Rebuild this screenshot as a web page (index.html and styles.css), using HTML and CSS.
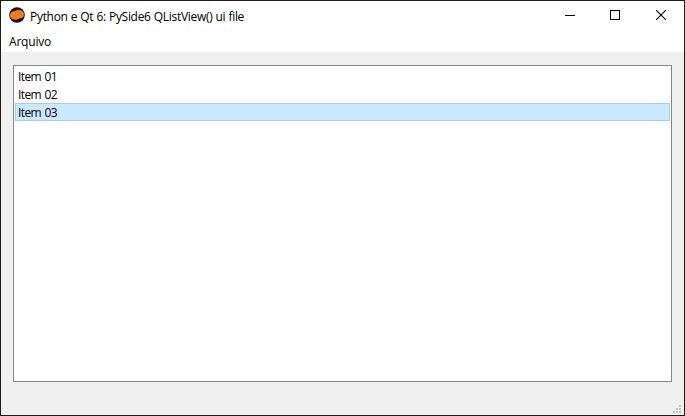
FILE: index.html
```html
<!DOCTYPE html>
<html lang="pt-BR">
<head>
<meta charset="utf-8">
<title>Python e Qt 6: PySide6 QListView() ui file</title>
<link rel="stylesheet" href="styles.css">
</head>
<body>
<div class="window">
  <header class="titlebar">
    <svg class="logo" viewBox="0 0 16 16" width="16" height="16">
      <circle cx="8" cy="8" r="7.800" fill="#17110d"/>
      <path d="M1.200 8.800C1.200 6.200 2.700 4.600 4.800 4.600c1.400 0 2-1.300 4.700-1.300 3 0 5.100 1.600 5.200 4 .1 2.200-1.200 3.700-3.200 3.700-1.400 0-2.400 1.400-4.900 1.400C3.500 12.400 1.200 11.100 1.200 8.800Z" fill="#f47a16" stroke="#d9b798" stroke-width=".4"/>
    </svg>
    <span class="title">Python e Qt 6: PySide6 QListView() ui file</span>
    <div class="controls">
      <svg class="minimize" viewBox="0 0 10 10" width="10" height="10" shape-rendering="crispEdges"><path d="M0 5.500H10" stroke="#000"/></svg>
      <svg viewBox="0 0 10 10" width="10" height="10" shape-rendering="crispEdges"><rect x=".5" y=".5" width="9" height="9" fill="none" stroke="#000"/></svg>
      <svg viewBox="0 0 10 10" width="10" height="10"><path d="M0 0L10 10M10 0L0 10" fill="none" stroke="#000" stroke-width="1.100"/></svg>
    </div>
  </header>
  <nav class="menubar"><span class="menu">Arquivo</span></nav>
  <main class="content">
    <ul class="list">
      <li class="item">Item 01</li>
      <li class="item">Item 02</li>
      <li class="item selected">Item 03</li>
    </ul>
  </main>
  <footer class="statusbar">
    <svg viewBox="0 0 8 8" width="8" height="8" shape-rendering="crispEdges" fill="#bfbfbf">
      <path d="M6 0h2v2H6zM3 3h2v2H3zM6 3h2v2H6zM0 6h2v2H0zM3 6h2v2H3zM6 6h2v2H6z"/>
    </svg>
  </footer>
</div>
</body>
</html>
```
FILE: styles.css
```css
* { box-sizing: border-box; }

body {
  margin: 0;
  font: 12px/18px "Open Sans", "Noto Sans", sans-serif;
  color: #000;
  overflow: hidden;
}

.window {
  display: flex;
  flex-direction: column;
  width: 685px;
  height: 416px;
  border: 1px solid #1e1b1e;
  background: #f0f0f0;
}

.titlebar {
  display: flex;
  align-items: center;
  height: 30px;
  padding: 0 18px 0 8px;
  background: #fff;
}

.logo { margin-top: -2px; }

.title {
  margin: 1px 0 0 5px;
  letter-spacing: -0.3px;
  word-spacing: 0.3px;
  white-space: nowrap;
}

.controls {
  display: flex;
  gap: 36px;
  margin: -2px 0 0 auto;
}

.controls svg { display: block; }
.controls .minimize { margin-right: -1px; }

.menubar {
  height: 21px;
  padding: 2px 8px 0;
  background: #fff;
}

.menu { letter-spacing: -0.2px; }

.content {
  flex: 1;
  display: flex;
  padding: 13px 12px 0;
}

.list {
  flex: 1;
  margin: 0;
  padding: 1px;
  list-style: none;
  border: 1px solid #828790;
  background: #fff;
}

.item {
  height: 18px;
  padding: 1px 3px 0;
  letter-spacing: -0.6px;
  word-spacing: 1px;
}

.item.selected {
  padding: 0 2px;
  border: 1px solid #99d1ee;
  background: #cce8ff;
}

.statusbar {
  display: flex;
  justify-content: flex-end;
  align-items: flex-end;
  height: 33px;
  padding: 0 3px 2px 0;
}
```
